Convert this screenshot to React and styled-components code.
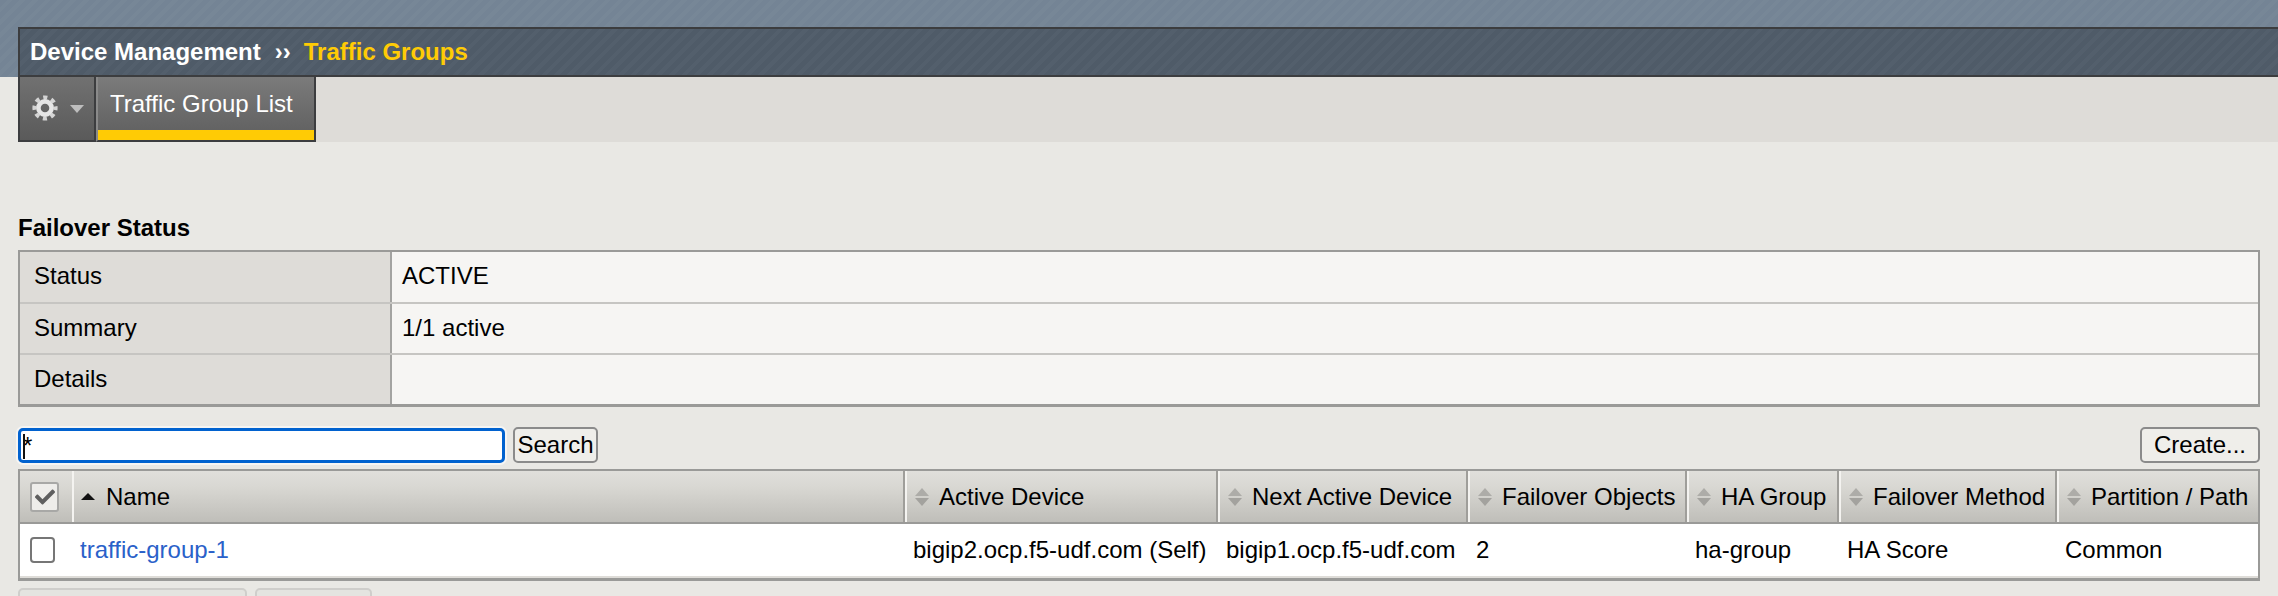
import React from 'react'
import styled, {createGlobalStyle} from 'styled-components'
import {FaCheck} from 'react-icons/fa'

const GlobalStyle = createGlobalStyle`
  html, body {
    margin: 0;
    height: 596px;
    overflow: hidden;
    background: #e9e8e4;
    font-family: "Liberation Sans", Arial, sans-serif;
    font-size: 24px;
    color: #000;
  }
`

const stripes = (base, line) => `repeating-linear-gradient(135deg, ${base} 0, ${base} 5px, ${line} 5px, ${line} 9px)`

const Banner = styled.div`
  height: 77px;
  box-sizing: border-box;
  padding: 27px 0 0 18px;
  background: ${stripes('#748495', '#778797')};
`
const TitleBar = styled.div`
  height: 50px;
  box-sizing: border-box;
  display: flex;
  align-items: center;
  padding-left: 10px;
  border: 2px solid #3c3d3f;
  border-right: 0;
  background: ${stripes('#4f5b68', '#535f6c')};
  font-weight: 700;
  color: #fff;
`
const Chevrons = styled.span`
  margin: 0 13px 0 14px;
`
const Current = styled.span`
  color: #ffcb05;
`
const TabRow = styled.div`
  height: 65px;
  margin-left: 18px;
  display: flex;
  background: #dedcd8;
`
const GearTab = styled.div`
  width: 78px;
  box-sizing: border-box;
  display: flex;
  align-items: center;
  gap: 12px;
  padding: 0 0 2px 12px;
  border: 2px solid #3c3d3f;
  border-top: 0;
  background: linear-gradient(#717171, #5a5a5a);
`
const GearIcon = styled.svg`
  width: 26px;
  height: 26px;
  flex: none;
  filter: blur(0.5px);
`
const Caret = styled.span`
  width: 0;
  height: 0;
  border-left: 7px solid transparent;
  border-right: 7px solid transparent;
  border-top: 8px solid #bdbdbd;
  margin-top: 2px;
`
const ListTab = styled.div`
  width: 220px;
  box-sizing: border-box;
  padding: 13px 0 0 12px;
  border-right: 2px solid #3c3d3f;
  border-bottom: 2px solid #3c3d3f;
  border-left: 2px solid #8a8a8a;
  background: linear-gradient(#7b7b7b, #5e5e5e);
  color: #fff;
  line-height: 28px;
  box-shadow: inset 0 -10px 0 #ffcb05;
`
const Content = styled.div`
  padding: 74px 18px 0;
`
const SectionTitle = styled.div`
  font-weight: 700;
  line-height: 24px;
  margin-bottom: 10px;
`
const StatusTable = styled.div`
  border: 2px solid #9a9a98;
  border-top: 0;
  border-bottom-width: 3px;
`
const StatusRow = styled.div`
  display: grid;
  grid-template-columns: 372px 1fr;
  height: ${props => (props.$first ? '52px' : '51px')};
  box-sizing: border-box;
  padding-bottom: 2px;
  border-top: 2px solid ${props => (props.$first ? '#9a9a98' : '#c6c5c2')};
`
const StatusLabel = styled.div`
  display: flex;
  align-items: center;
  padding-left: 14px;
  background: #dedcd8;
  border-right: 2px solid #a3a3a1;
  margin-bottom: -2px;
  padding-bottom: 2px;
`
const StatusValue = styled.div`
  display: flex;
  align-items: center;
  padding-left: 10px;
  background: #f6f5f3;
  margin-bottom: -2px;
  padding-bottom: 2px;
`
const Toolbar = styled.div`
  display: flex;
  align-items: center;
  gap: 8px;
  margin-top: 20px;
  height: 36px;
`
const SearchInput = styled.div`
  width: 487px;
  height: 35px;
  box-sizing: border-box;
  border: 3px solid #0162cf;
  border-radius: 5px;
  background: #fff;
  box-shadow: 0 0 0 2px #f6f5f3;
  padding-left: 2px;
  line-height: 30px;
  position: relative;
`
const Cursor = styled.span`
  position: absolute;
  left: 2px;
  top: 3px;
  width: 2px;
  height: 25px;
  background: #111;
`
const Button = styled.div`
  height: 36px;
  box-sizing: border-box;
  display: flex;
  align-items: center;
  border: 2px solid #8b8b8b;
  border-radius: 5px;
  background: #efeeea;
  margin-left: ${props => (props.$right ? 'auto' : '0')};
  padding: 0 ${props => (props.$right ? '12px' : '2.5px')};
`
const DataTable = styled.div`
  margin-top: 6px;
  border: 2px solid #9a9a98;
  border-bottom-width: 3px;
  background: #fff;
`
const columns = '52px 833px 313px 250px 219px 152px 218px 1fr'
const HeadRow = styled.div`
  display: grid;
  grid-template-columns: ${columns};
  height: 53px;
  box-sizing: border-box;
  border-bottom: 2px solid #9a9a98;
  background: linear-gradient(#e0dfdb, #d9d8d3 30%, #bfbeb9);
`
const HeadCell = styled.div`
  display: flex;
  align-items: center;
  gap: ${props => (props.$name ? '11px' : '10px')};
  padding-left: ${props => (props.$name ? '7px' : '8px')};
  border-left: 2px solid #f4f3f0;
  white-space: nowrap;
  box-shadow: ${props => (props.$name ? 'none' : '-2px 0 0 #9f9e9a')};
`
const CheckCell = styled.div`
  display: flex;
  align-items: center;
`
const SortIcon = styled.svg`
  width: 14px;
  height: 22px;
  flex: none;
`
const MasterCheck = styled.span`
  width: 29px;
  height: 30px;
  box-sizing: border-box;
  margin-left: 10px;
  display: flex;
  align-items: center;
  justify-content: center;
  border: 2px solid #a8a8a6;
  border-radius: 3px;
  background: #eeedea;
  color: #5f5f5f;
  font-size: 20px;
`
const BodyRow = styled.div`
  display: grid;
  grid-template-columns: ${columns};
  height: 54px;
  align-items: center;
  border-bottom: 2px solid #dedcd8;
  box-sizing: border-box;
`
const BodyCell = styled.div`
  padding-left: 8px;
  white-space: nowrap;
`
const RowCheck = styled.span`
  display: block;
  width: 25px;
  height: 26px;
  box-sizing: border-box;
  margin-left: 10px;
  border: 2px solid #767676;
  border-radius: 4px;
  background: #fff;
`
const NameLink = styled.span`
  color: #2a61c9;
`
const ActionRow = styled.div`
  display: flex;
  gap: 8px;
  margin-top: 7px;
`
const DisabledButton = styled.div`
  height: 36px;
  box-sizing: border-box;
  display: flex;
  align-items: center;
  padding: 0 11px 0 13px;
  border: 2px solid #cfcecb;
  border-radius: 5px;
  background: #e4e4e0;
  color: #a8a8a6;
`

function Gear() {
  return (
    <GearIcon viewBox="0 0 26 26">
      <circle cx="13" cy="13" r="10.6" fill="none" stroke="#d4d4d4" strokeWidth="4" strokeDasharray="4.16 4.16" strokeDashoffset="2.08" />
      <circle cx="13" cy="13" r="6.6" fill="none" stroke="#e6e6e6" strokeWidth="4.6" />
    </GearIcon>
  )
}

function SortArrows({active}) {
  if (active) {
    return (
      <SortIcon viewBox="0 0 14 22">
        <path d="M7 7 L14 14 L0 14 Z" fill="#111" />
      </SortIcon>
    )
  }
  return (
    <SortIcon viewBox="0 0 14 22">
      <path d="M7 2 L14 10 L0 10 Z" fill="#adaca8" />
      <path d="M0 12 L14 12 L7 20 Z" fill="#a3a29e" />
    </SortIcon>
  )
}

const headers = ['Active Device', 'Next Active Device', 'Failover Objects', 'HA Group', 'Failover Method', 'Partition / Path']
const row = ['bigip2.ocp.f5-udf.com (Self)', 'bigip1.ocp.f5-udf.com', '2', 'ha-group', 'HA Score', 'Common']
const status = [
  ['Status', 'ACTIVE'],
  ['Summary', '1/1 active'],
  ['Details', ''],
]

function App() {
  return (
    <>
      <GlobalStyle />
      <Banner>
        <TitleBar>
          Device Management
          <Chevrons>››</Chevrons>
          <Current>Traffic Groups</Current>
        </TitleBar>
      </Banner>
      <TabRow>
        <GearTab>
          <Gear />
          <Caret />
        </GearTab>
        <ListTab>Traffic Group List</ListTab>
      </TabRow>
      <Content>
        <SectionTitle>Failover Status</SectionTitle>
        <StatusTable>
          {status.map(([label, value], i) => (
            <StatusRow key={label} $first={i === 0}>
              <StatusLabel>{label}</StatusLabel>
              <StatusValue>{value}</StatusValue>
            </StatusRow>
          ))}
        </StatusTable>
        <Toolbar>
          <SearchInput>
            *<Cursor />
          </SearchInput>
          <Button>Search</Button>
          <Button $right>Create...</Button>
        </Toolbar>
        <DataTable>
          <HeadRow>
            <CheckCell>
              <MasterCheck>
                <FaCheck />
              </MasterCheck>
            </CheckCell>
            <HeadCell $name>
              <SortArrows active />
              Name
            </HeadCell>
            {headers.map(h => (
              <HeadCell key={h}>
                <SortArrows />
                {h}
              </HeadCell>
            ))}
          </HeadRow>
          <BodyRow>
            <CheckCell>
              <RowCheck />
            </CheckCell>
            <BodyCell>
              <NameLink>traffic-group-1</NameLink>
            </BodyCell>
            {row.map(c => (
              <BodyCell key={c}>{c}</BodyCell>
            ))}
          </BodyRow>
        </DataTable>
        <ActionRow>
          <DisabledButton>Force to Standby...</DisabledButton>
          <DisabledButton>Delete...</DisabledButton>
        </ActionRow>
      </Content>
    </>
  )
}

export default App
